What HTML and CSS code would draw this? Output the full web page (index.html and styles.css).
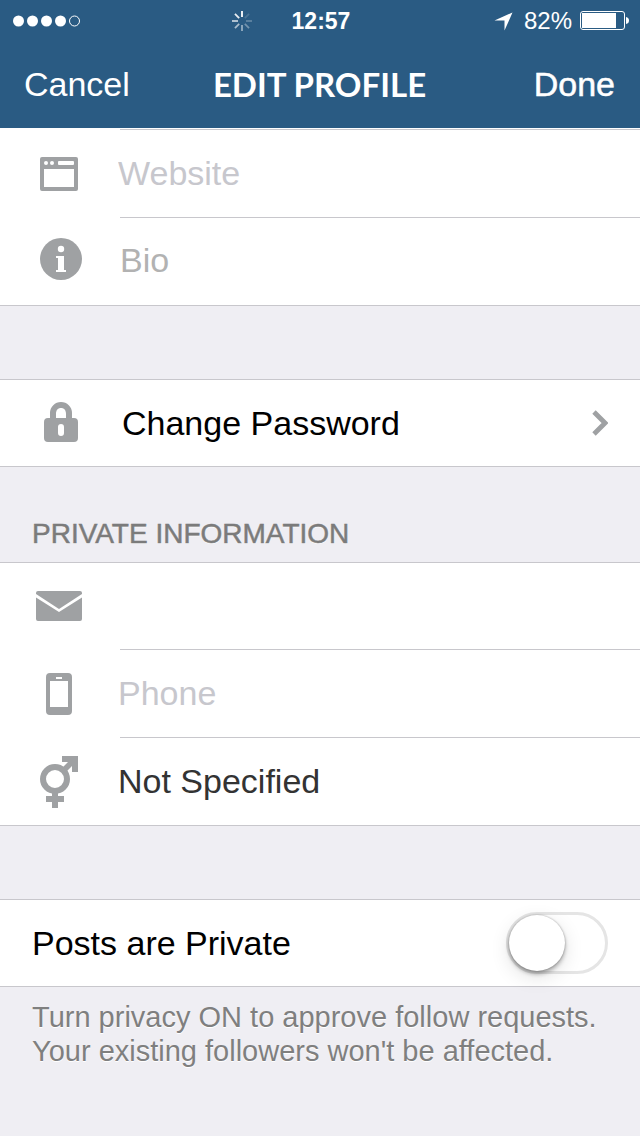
FILE: index.html
```html
<!DOCTYPE html>
<html lang="en">
<head>
<meta charset="utf-8">
<meta name="viewport" content="width=device-width, initial-scale=1">
<title>Edit Profile</title>
<link rel="stylesheet" href="styles.css">
</head>
<body>
<header class="top">
  <div class="status">
    <div class="status-left">
      <svg class="signal" width="68" height="12" viewBox="0 0 68 12" aria-label="Signal strength">
        <g fill="#fff"><circle cx="5.5" cy="6" r="5.5"/><circle cx="19.5" cy="6" r="5.5"/><circle cx="33.5" cy="6" r="5.5"/><circle cx="47.5" cy="6" r="5.5"/></g>
        <circle cx="61.5" cy="6" r="5" fill="none" stroke="#fff"/>
      </svg>
      <svg width="20" height="20" viewBox="-10 -10 20 20" stroke="#fff" stroke-width="1.8" aria-label="Loading">
        <path d="M0-10V-4"/>
        <path d="M0-10V-4" transform="rotate(45)" opacity=".15"/>
        <path d="M0-10V-4" transform="rotate(90)" opacity=".25"/>
        <path d="M0-10V-4" transform="rotate(135)" opacity=".35"/>
        <path d="M0-10V-4" transform="rotate(180)" opacity=".5"/>
        <path d="M0-10V-4" transform="rotate(225)" opacity=".6"/>
        <path d="M0-10V-4" transform="rotate(270)" opacity=".7"/>
        <path d="M0-10V-4" transform="rotate(315)" opacity=".9"/>
      </svg>
    </div>
    <time class="clock">12:57</time>
    <div class="status-right">
      <svg width="19" height="19" viewBox="0 0 19 19" aria-label="Location"><path d="M18.500 0.500L10.500 18.500V8.500H0.500Z" fill="#fff"/></svg>
      <span class="charge">82%</span>
      <svg width="49" height="20" viewBox="0 0 49 20" aria-label="Battery">
        <rect x=".5" y=".5" width="44" height="18" rx="2.500" fill="none" stroke="#fff"/>
        <rect x="2" y="2" width="34" height="15" fill="#fff"/>
        <path d="M46 6q3 .5 3 3.500t-3 3.500z" fill="#fff"/>
      </svg>
    </div>
  </div>
  <nav class="nav">
    <button class="nav-button" type="button">Cancel</button>
    <h1 class="title">EDIT PROFILE</h1>
    <button class="nav-button done" type="button">Done</button>
  </nav>
</header>
<main>
  <section class="group public">
    <div class="row">
      <label class="icon" for="website" aria-label="Website">
        <svg width="38" height="34" viewBox="0 0 38 34"><path fill="#9fa1a3" fill-rule="evenodd" d="M2 0H36a2 2 0 0 1 2 2V32a2 2 0 0 1-2 2H2a2 2 0 0 1-2-2V2a2 2 0 0 1 2-2ZM4 12V30H34V12ZM19 4a1 1 0 0 0-1 1V7a1 1 0 0 0 1 1H33a1 1 0 0 0 1-1V5a1 1 0 0 0-1-1Z"/><circle cx="6" cy="6" r="2" fill="#fff"/><circle cx="12" cy="6" r="2" fill="#fff"/></svg>
      </label>
      <div class="cell"><input class="field" id="website" type="url" placeholder="Website"></div>
    </div>
    <div class="row">
      <label class="icon info" for="bio" aria-label="Bio">
        <svg width="42" height="42" viewBox="0 0 42 42"><circle cx="21" cy="21" r="21" fill="#9fa1a3"/><g fill="#fff"><circle cx="21" cy="11" r="3.200"/><path d="M16 18H24V32H26V34H16V32H18V20H16Z"/></g></svg>
      </label>
      <div class="cell"><textarea class="field bio" id="bio" rows="1" placeholder="Bio"></textarea></div>
    </div>
  </section>

  <section class="group spaced">
    <button class="row password" type="button">
      <span class="icon lock">
        <svg width="34" height="40" viewBox="0 0 34 40"><path fill="#9fa1a3" fill-rule="evenodd" d="M6 16V11a11 11 0 0 1 22 0V16H30a4 4 0 0 1 4 4V36a4 4 0 0 1-4 4H4a4 4 0 0 1-4-4V20a4 4 0 0 1 4-4ZM12 16H22V12C22 8 20 6 17 6S12 8 12 12ZM17 22a3 3 0 0 0-3 3V31a3 3 0 0 0 6 0V25a3 3 0 0 0-3-3Z"/></svg>
      </span>
      <span class="cell">Change Password</span>
      <svg width="16" height="26" viewBox="0 0 16 26"><path d="M2 2L13 13L2 24" fill="none" stroke="#9fa1a3" stroke-width="4.800"/></svg>
    </button>
  </section>

  <h2 class="heading">PRIVATE INFORMATION</h2>
  <section class="group">
    <div class="row">
      <label class="icon mail" for="email" aria-label="Email">
        <svg width="46" height="30" viewBox="0 0 46 30"><g fill="#9fa1a3"><path d="M2 0H44a2 2 0 0 1 2 2V3L23 18L0 3V2A2 2 0 0 1 2 0Z"/><path d="M0 6.500L23 21L46 6.500V28a2 2 0 0 1-2 2H2a2 2 0 0 1-2-2Z"/></g></svg>
      </label>
      <div class="cell"><input class="field" id="email" type="email"></div>
    </div>
    <div class="row">
      <label class="icon handset" for="phone" aria-label="Phone">
        <svg width="26" height="42" viewBox="0 0 26 42"><path fill="#9fa1a3" fill-rule="evenodd" d="M4 0H22a4 4 0 0 1 4 4V38a4 4 0 0 1-4 4H4a4 4 0 0 1-4-4V4a4 4 0 0 1 4-4ZM4 8V34H22V8ZM10 4V6H16V4Z"/></svg>
      </label>
      <div class="cell"><input class="field" id="phone" type="tel" placeholder="Phone"></div>
    </div>
    <div class="row">
      <label class="icon" for="gender" aria-label="Gender">
        <svg width="38" height="52" viewBox="0 0 38 52"><circle cx="15" cy="23" r="12" fill="none" stroke="#9fa1a3" stroke-width="6"/><path fill="#9fa1a3" d="M22 0H38V16H32V10L26 16L22 12L28 6H22ZM12 37H18V40H24V46H18V52H12V46H6V40H12Z"/></svg>
      </label>
      <div class="cell"><select class="field gender" id="gender"><option>Not Specified</option><option>Male</option><option>Female</option></select></div>
    </div>
  </section>

  <section class="group spaced">
    <div class="row private">
      <label for="private">Posts are Private</label>
      <input class="switch" id="private" type="checkbox" role="switch">
    </div>
  </section>
  <p class="note">Turn privacy ON to approve follow requests. Your existing followers won't be affected.</p>
</main>
</body>
</html>
```
FILE: styles.css
```css
* { box-sizing: border-box; }
body {
  margin: 0;
  min-height: 100vh;
  background: #efeef3;
  color: #000;
  font: 34px/40px "Liberation Sans", Arial, sans-serif;
}
button, input, textarea, select {
  margin: 0;
  padding: 0;
  border: 0;
  border-radius: 0;
  background: none;
  color: inherit;
  font: inherit;
  appearance: none;
}
svg { display: block; flex: none; }

.top { background: #2a5b83; color: #fff; }
.status, .nav {
  display: grid;
  grid-template-columns: 1fr auto 1fr;
  align-items: center;
}
.status { height: 40px; padding: 0 11px 0 13px; font-size: 24px; line-height: 42px; }
.status-left { display: flex; align-items: center; justify-content: space-between; padding-right: 40px; }
.status-right { display: flex; align-items: center; justify-content: flex-end; }
.clock { font-size: 23px; font-weight: bold; }
.charge { margin: 0 8px 0 11px; }
.nav { height: 88px; padding: 0 25px 0 24px; }
.nav-button { justify-self: start; }
.done { justify-self: end; -webkit-text-stroke: 0.5px #fff; }
.title { margin: 0; font: bold 33px/40px Lato, sans-serif; }

.group { background: #fff; border-top: 1px solid #c8c7cc; border-bottom: 1px solid #c8c7cc; }
.public { border-top-color: #fff; }
.spaced { margin-top: 73px; }
.row { display: flex; width: 100%; min-height: 86px; align-items: stretch; text-align: left; }
.public .row, .row + .row { min-height: 88px; }
.icon { display: flex; width: 120px; padding: 2px 0 0 40px; align-items: center; flex: none; }
.info { padding-top: 0; padding-bottom: 4px; }
.mail { padding: 0 0 0 36px; }
.handset { padding-left: 46px; }
.lock { width: 122px; padding: 0 0 2px 44px; }
.cell { display: flex; flex: 1; align-items: center; min-width: 0; }
.public .cell, .row + .row .cell { padding-bottom: 2px; border-top: 1px solid #c8c7cc; }
.field { flex: 1; min-width: 0; height: 40px; margin-left: -2px; outline: 0; }
.field::placeholder { color: #c7c7cd; opacity: 1; }
.bio { margin: 0 0 2px; resize: none; overflow: hidden; }
.bio::placeholder { color: #b2b2b2; }
.gender { color: #333; }
.password { align-items: center; padding-right: 32px; }

.heading {
  margin: 50px 32px 11px;
  color: #7b7b7b;
  font-size: 28px;
  font-weight: normal;
  line-height: 34px;
  text-shadow: 0 1px 0 #fff;
  -webkit-text-stroke: 0.5px #7b7b7b;
}
.private { align-items: center; justify-content: space-between; padding: 0 32px; }
.switch {
  display: flex;
  width: 102px;
  height: 62px;
  border: 3px solid #e5e5e5;
  border-radius: 31px;
}
.switch::before {
  content: "";
  width: 56px;
  height: 56px;
  border-radius: 50%;
  background: #fff;
  box-shadow: 0 3px 4px rgba(0, 0, 0, .3), 0 0 2px rgba(0, 0, 0, .3), 0 6px 20px rgba(0, 0, 0, .12);
}
.switch:checked { justify-content: flex-end; background: #4cd964; }
.note {
  margin: 0;
  padding: 13px 32px 40px;
  color: #7f7f7f;
  font-size: 29px;
  line-height: 34px;
  text-shadow: 0 1px 0 #fff;
}
```
